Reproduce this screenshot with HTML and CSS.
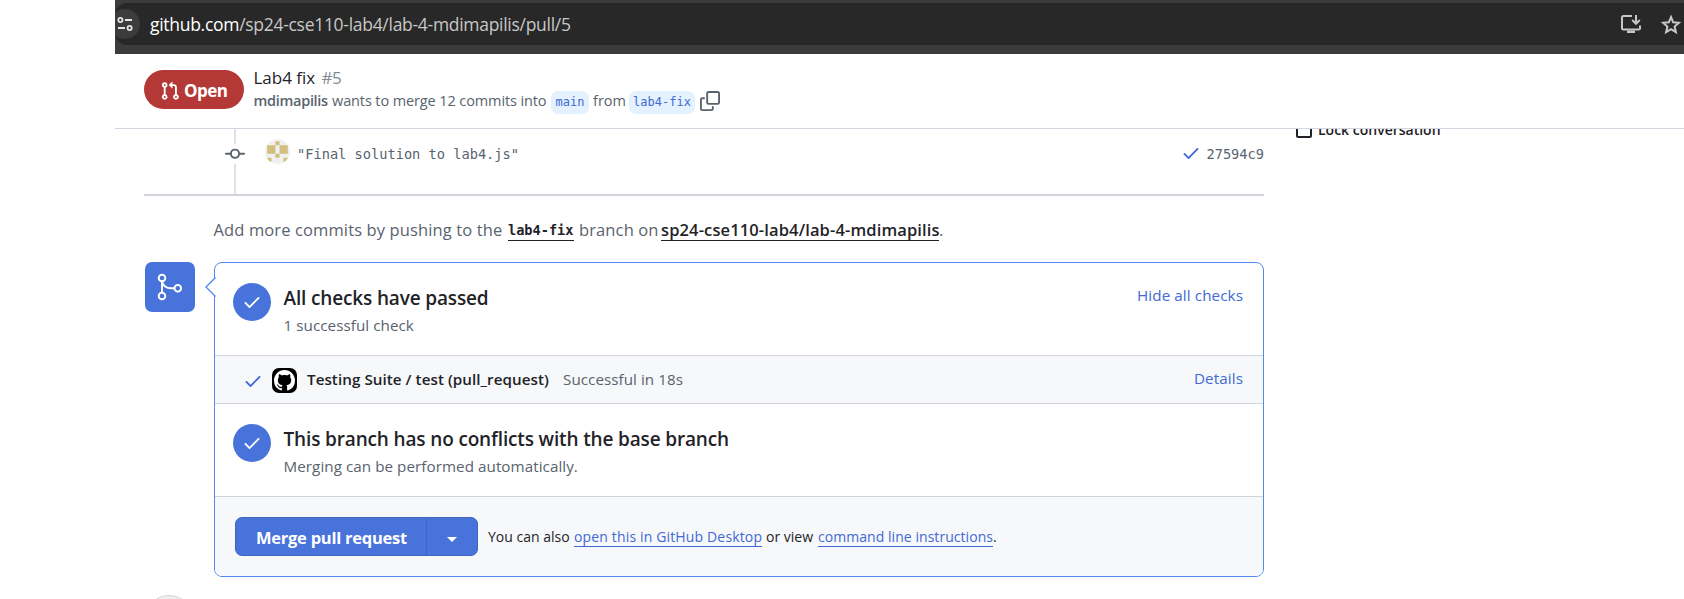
FILE: index.html
```html
<!DOCTYPE html>
<html lang="en">
<head>
<meta charset="utf-8">
<title>Lab4 fix #5</title>
<link rel="stylesheet" href="styles.css">
</head>
<body>
<div class="window">
  <div class="toolbar">
    <div class="omnibox">
      <span class="site-info"><svg width="16" height="16" viewBox="0 0 16 16" fill="none" stroke="#e3e3e3" stroke-width="1.8"><circle cx="3.4" cy="4" r="2.1"/><path d="M8 4h7M1 12h7"/><circle cx="12.6" cy="12" r="2.1"/></svg></span>
      <span class="url"><span class="host">github.com</span>/sp24-cse110-lab4/lab-4-mdimapilis/pull/5</span>
      <svg class="install" width="22" height="20" viewBox="0 0 22 20" fill="none" stroke="#c7c7c7" stroke-width="2"><path d="M12 2H3.500Q2 2 2 3.500V14Q2 15.500 3.500 15.500H18.500Q20 15.500 20 14V11.500M16 1v8M12.200 6l3.800 3.800L19.800 6"/><path d="M7 16.500h8v2.500H7z" fill="#c7c7c7" stroke="none"/></svg>
      <svg class="star" width="22" height="21" viewBox="0 0 22 21" fill="none" stroke="#c7c7c7" stroke-width="2"><path d="M11 3l2.200 5.300 5.700.5-4.300 3.800 1.300 5.600L11 15.200l-4.900 3 1.300-5.600-4.300-3.800 5.700-.5z"/></svg>
    </div>
  </div>

  <header class="pr-header">
    <span class="state"><svg width="20" height="20" viewBox="0 0 16 16" fill="#fff"><path d="M1.500 3.250a2.250 2.250 0 1 1 3 2.122v5.256a2.251 2.251 0 1 1-1.500 0V5.372A2.250 2.250 0 0 1 1.500 3.250Zm5.677-.177L9.573.677A.25.25 0 0 1 10 .854V2.500h1A2.500 2.500 0 0 1 13.500 5v5.628a2.251 2.251 0 1 1-1.500 0V5a1 1 0 0 0-1-1h-1v1.646a.25.25 0 0 1-.427.177L7.177 3.427a.25.25 0 0 1 0-.354ZM3.750 2.500a.75.75 0 1 0 0 1.500.75.75 0 0 0 0-1.500Zm0 9.500a.75.75 0 1 0 0 1.500.75.75 0 0 0 0-1.500Zm8.250.75a.75.75 0 1 0 1.500 0 .75.75 0 0 0-1.500 0Z"/></svg><b>Open</b></span>
    <div class="pr-info">
      <div class="pr-title"><span class="name">Lab4 fix</span><span class="number">#5</span></div>
      <div class="pr-meta">
        <b class="author">mdimapilis</b><span class="wants">wants to merge 12 commits into</span><span class="branch main">main</span><span class="from">from</span><span class="branch fix">lab4-fix</span>
        <svg width="20" height="20" viewBox="0 0 16 16" fill="#59636e"><path d="M0 6.750C0 5.784.784 5 1.750 5h1.500a.75.75 0 0 1 0 1.500h-1.500a.25.25 0 0 0-.25.25v7.500c0 .138.112.25.25.25h7.500a.25.25 0 0 0 .25-.25v-1.500a.75.75 0 0 1 1.500 0v1.500A1.750 1.750 0 0 1 9.250 16h-7.500A1.750 1.750 0 0 1 0 14.250Z"/><path d="M5 1.750C5 .784 5.784 0 6.750 0h7.500C15.216 0 16 .784 16 1.750v7.500A1.750 1.750 0 0 1 14.250 11h-7.500A1.750 1.750 0 0 1 5 9.250Zm1.750-.25a.25.25 0 0 0-.25.25v7.500c0 .138.112.25.25.25h7.500a.25.25 0 0 0 .25-.25v-7.500a.25.25 0 0 0-.25-.25Z"/></svg>
      </div>
    </div>
  </header>

  <div class="content">
    <main class="discussion">
      <div class="commit">
        <span class="rail"><i class="rail-top"></i><svg width="20" height="20" viewBox="0 0 16 16" fill="#59636e"><path d="M11.930 8.500a4.002 4.002 0 0 1-7.860 0H.75a.75.75 0 0 1 0-1.500h3.320a4.002 4.002 0 0 1 7.860 0h3.320a.75.75 0 0 1 0 1.500Zm-1.430-.75a2.500 2.500 0 1 0-5 0 2.500 2.500 0 0 0 5 0Z"/></svg><i class="rail-bottom"></i></span>
        <svg class="avatar" width="25" height="25" viewBox="0 0 25 25"><defs><clipPath id="round"><circle cx="12.500" cy="12.500" r="12.500"/></clipPath></defs><g clip-path="url(#round)"><path fill="#f0f0f0" d="M0 0h25v25H0z"/><path fill="#d2bf7d" d="M10.400 2.200h4.200v4.100h-4.200zM2.200 6.300h8.200v8.400H2.200zM14.600 6.300h8.200v8.400h-8.200zM10.400 14.700h4.200v4.100h-4.200zM2.200 18.800h4.200v4.200H2.200zM18.600 18.800h4.200v4.200h-4.200z"/></g></svg>
        <span class="message">"Final solution to lab4.js"</span>
        <svg class="ok" width="20" height="20" viewBox="0 0 16 16" fill="#4269d4"><path d="M13.780 4.220a.75.75 0 0 1 0 1.060l-7.250 7.250a.75.75 0 0 1-1.060 0L2.220 9.280a.751.751 0 0 1 .018-1.042.751.751 0 0 1 1.042-.018L6 10.940l6.720-6.720a.75.75 0 0 1 1.060 0Z"/></svg>
        <span class="sha">27594c9</span>
      </div>

      <p class="push-hint"><span class="add">Add more commits by pushing to the</span><a class="ref">lab4-fix</a><span class="on">branch on</span><a class="repo">sp24-cse110-lab4/lab-4-mdimapilis</a><span class="dot">.</span></p>

      <div class="merge">
        <div class="merge-icon"><svg width="30" height="30" viewBox="0 0 30 30" fill="none" stroke="#fff" stroke-width="1.9"><circle cx="7" cy="6" r="3.300"/><circle cx="7" cy="24" r="3.300"/><circle cx="22.800" cy="16.300" r="3.300"/><path d="M7 9.300v11.400M7 9.500c1.200 4.400 4.500 6.800 9 6.800h3.500"/></svg></div>
        <section class="merge-box">
          <svg class="pointer" width="11" height="20" viewBox="0 0 11 20"><path d="M10.500 .5L1 10l9.500 9.500" fill="#fff" stroke="#4a86f2" stroke-width="1.300"/></svg>
          <div class="status">
            <span class="badge"><svg width="20" height="20" viewBox="0 0 16 16" fill="#fff"><path d="M13.780 4.220a.75.75 0 0 1 0 1.060l-7.250 7.250a.75.75 0 0 1-1.060 0L2.220 9.280a.751.751 0 0 1 .018-1.042.751.751 0 0 1 1.042-.018L6 10.940l6.720-6.720a.75.75 0 0 1 1.060 0Z"/></svg></span>
            <div class="status-text"><h3>All checks have passed</h3><p>1 successful check</p></div>
            <a class="hide">Hide all checks</a>
          </div>
          <div class="check">
            <svg class="ok" width="20" height="20" viewBox="0 0 16 16" fill="#4269d4"><path d="M13.780 4.220a.75.75 0 0 1 0 1.060l-7.250 7.250a.75.75 0 0 1-1.060 0L2.220 9.280a.751.751 0 0 1 .018-1.042.751.751 0 0 1 1.042-.018L6 10.940l6.720-6.720a.75.75 0 0 1 1.060 0Z"/></svg>
            <span class="app"><svg width="21" height="21" viewBox="0 0 16 16" fill="#fff"><path d="M8 0c4.420 0 8 3.580 8 8a8.013 8.013 0 0 1-5.450 7.590c-.4.080-.55-.17-.55-.38 0-.27.010-1.130.010-2.200 0-.75-.25-1.230-.54-1.480 1.780-.2 3.650-.88 3.650-3.950 0-.88-.31-1.590-.82-2.150.080-.2.360-1.020-.080-2.120 0 0-.67-.22-2.200.82-.64-.18-1.320-.27-2-.27-.68 0-1.360.090-2 .27-1.530-1.030-2.200-.82-2.200-.82-.44 1.100-.16 1.920-.080 2.120-.51.560-.82 1.280-.82 2.150 0 3.060 1.860 3.750 3.640 3.950-.23.200-.44.550-.51 1.070-.46.210-1.610.550-2.330-.66-.15-.24-.6-.83-1.230-.82-.67.010-.27.380.010.530.34.190.73.900.82 1.130.16.450.68 1.310 2.690.94 0 .67.010 1.300.010 1.490 0 .21-.15.450-.55.380A7.995 7.995 0 0 1 0 8c0-4.420 3.580-8 8-8Z"/></svg></span>
            <span class="job">Testing Suite / test (pull_request)</span><span class="time">Successful in 18s</span><a class="details">Details</a>
          </div>
          <div class="status">
            <span class="badge"><svg width="20" height="20" viewBox="0 0 16 16" fill="#fff"><path d="M13.780 4.220a.75.75 0 0 1 0 1.060l-7.250 7.250a.75.75 0 0 1-1.060 0L2.220 9.280a.751.751 0 0 1 .018-1.042.751.751 0 0 1 1.042-.018L6 10.940l6.720-6.720a.75.75 0 0 1 1.060 0Z"/></svg></span>
            <div class="status-text"><h3>This branch has no conflicts with the base branch</h3><p>Merging can be performed automatically.</p></div>
          </div>
          <div class="actions">
            <div class="button"><span class="button-main"><b>Merge pull request</b></span><span class="button-more"><i></i></span></div>
            <p class="also"><span class="a1">You can also</span><a class="a2">open this in GitHub Desktop</a><span class="a3">or view</span><a class="a4">command line instructions</a><span class="a5">.</span></p>
          </div>
        </section>
      </div>
      <div class="next-avatar"></div>
    </main>
    <aside class="sidebar"><span class="lock"></span><b>Lock conversation</b></aside>
  </div>
</div>
</body>
</html>
```
FILE: styles.css
```css
* { box-sizing: border-box; }
body { margin: 0; background: #fff; font-family: "Open Sans", "Noto Sans", sans-serif; color: #1f2328; }
h3, p { margin: 0; }
svg { display: block; flex: none; }
.window { width: 1569px; height: 599px; margin-left: 115px; overflow: hidden; }
.window span, .window a, .window b { white-space: nowrap; flex: none; }

.toolbar { height: 54px; padding-top: 3px; background: #3c3c3c; }
.omnibox { display: flex; align-items: center; height: 42px; background: #282828; border-radius: 12px 0 0 12px; color: #c7c7c7; overflow: hidden; }
.site-info { display: flex; align-items: center; justify-content: center; width: 30px; height: 30px; margin-left: -5px; border-radius: 50%; background: #3c3c3c; }
.url { margin-left: 10px; font-size: 17.500px; line-height: 24px; letter-spacing: -0.29px; }
.host { color: #fff; }
.install { margin-left: auto; }
.star { margin: 0 2px 0 18px; }

.pr-header { display: flex; height: 75px; padding: 16px 0 0 29px; border-bottom: 1px solid #d1d5e0; }
.state { display: flex; align-items: center; width: 100px; height: 39px; padding-left: 16px; gap: 4px; border-radius: 20px; background: #b33836; color: #fff; font-size: 17px; }
.state svg { margin-top: 3px; }
.state b { margin-top: 2px; font-weight: 700; letter-spacing: -0.5px; }
.pr-info { margin-left: 9.500px; margin-top: -5px; }
.pr-title { display: flex; height: 25px; font-size: 17px; line-height: 25px; }
.pr-title .name { width: 68px; font-weight: 500; }
.number { color: #818b98; letter-spacing: -0.4px; }
.pr-meta { display: flex; align-items: center; height: 26px; margin-top: -1px; color: #59636e; font-size: 14.500px; }
.author { width: 78.500px; margin-top: -3px; font-weight: 600; letter-spacing: -0.3px; }
.wants { width: 219px; margin-top: -3px; letter-spacing: -0.11px; }
.branch { height: 23px; border-radius: 7px; background: #e3f2fe; color: #4269d4; font: 12px/23px "DejaVu Sans Mono", monospace; text-align: center; }
.main { width: 38px; }
.from { width: 40px; margin-top: -3px; padding-left: 4px; }
.fix { width: 66px; margin-right: 5px; }
.pr-meta svg { margin-top: -3px; }

.content { display: flex; height: 470px; }
.discussion { width: 1120px; margin-left: 29px; }
.commit { display: flex; height: 67px; border-bottom: 2px solid #d1d5db; font: 13.670px/20px "DejaVu Sans Mono", monospace; color: #59636e; }
.rail { display: flex; flex-direction: column; align-items: center; width: 20px; margin-left: 81px; }
.rail i { width: 2px; background: #dee2e7; }
.rail-top { height: 15px; }
.rail-bottom { height: 30px; }
.avatar { margin: 10px 0 0 20px; }
.message { margin: 15px 0 0 7px; }
.commit .ok { margin: 14px 0 0 auto; }
.sha { margin: 15px 0 0 5px; }

.push-hint { display: flex; height: 66px; padding: 21px 0 0 69.500px; font-size: 16.500px; line-height: 25px; letter-spacing: 0.12px; color: #59636e; }
.add { width: 294.500px; }
.push-hint a { height: 24px; border-bottom: 1px solid #1f2328; color: #1f2328; font-weight: 600; }
.ref { width: 66px; font: bold 13.600px/27px "DejaVu Sans Mono", monospace; letter-spacing: 0; }
.on { width: 87px; padding-left: 5px; }
.repo { width: 278px; }

.merge { display: flex; padding-left: 1px; }
.merge-icon { display: flex; align-items: center; justify-content: center; width: 50px; height: 50px; margin-right: 19px; border-radius: 7px; background: #4873db; }
.merge-box { position: relative; width: 1050px; height: 315px; border: 1px solid #5189f0; border-radius: 8px; }
.pointer { position: absolute; left: -10px; top: 14px; }
.status { display: flex; height: 93px; padding: 20px 20px 0 18px; border-bottom: 1px solid #d1d5db; }
.badge { display: flex; align-items: center; justify-content: center; width: 38px; height: 38px; border-radius: 50%; background: #4873db; }
.status-text { width: 500px; margin-left: 12.500px; }
.status h3 { font-size: 19px; line-height: 30px; font-weight: 600; letter-spacing: -0.15px; }
.status p { color: #59636e; font-size: 15.200px; line-height: 25px; letter-spacing: 0.06px; }
.hide { margin-left: auto; }
.hide, .details { color: #4269d4; font-size: 15.200px; line-height: 25px; letter-spacing: 0.1px; }
.check { display: flex; align-items: center; height: 48px; padding: 0 20px 0 28px; border-bottom: 1px solid #d1d5db; background: #f6f8fa; font-size: 15.200px; }
.check .ok { margin-top: 3px; }
.app { display: flex; align-items: center; justify-content: center; width: 25px; height: 25px; margin: 2px 10px 0 9px; border-radius: 7px; background: #000; }
.job { width: 256px; margin-top: -2px; font-weight: 600; letter-spacing: 0.05px; }
.time { margin-top: -2px; color: #59636e; letter-spacing: 0.05px; }
.details { margin: -2px 0 0 auto; }
.actions { display: flex; height: 79px; padding: 20px; background: #f6f8fa; border-radius: 0 0 7px 7px; }
.button { display: flex; width: 243px; height: 39px; border: 1px solid #3f65bf; border-radius: 7px; background: #4873db; color: #fff; }
.button-main { width: 191px; border-right: 1px solid #3f65bf; padding-left: 20px; font-size: 16.500px; line-height: 39px; letter-spacing: -0.25px; }
.button-main b { font-weight: 700; }
.button-more { display: flex; align-items: center; justify-content: center; width: 50px; }
.button-more i { margin-top: 5px; border: 5px solid transparent; border-top-color: #fff; border-bottom: 0; }
.also { display: flex; margin: 8px 0 0 10px; font-size: 14px; line-height: 24px; }
.also a { height: 22px; border-bottom: 1px solid #4269d4; color: #4269d4; }
.a1 { width: 86px; }
.a2 { width: 188px; letter-spacing: 0.15px; }
.a3 { width: 56px; padding-left: 4px; }
.a4 { width: 175px; letter-spacing: 0.05px; }
.next-avatar { width: 50px; height: 50px; margin: 18px 0 0 0; border: 1px solid #d5d5d5; border-radius: 50%; background: #f0f0f0; }
.sidebar { display: flex; height: 20px; margin-left: 32px; overflow: hidden; font-size: 14px; }
.lock { width: 16px; height: 14px; margin-top: -5px; border: 2px solid #1f2328; border-radius: 2px; }
.sidebar b { margin: -11px 0 0 6px; line-height: 24px; font-weight: 600; }
```
